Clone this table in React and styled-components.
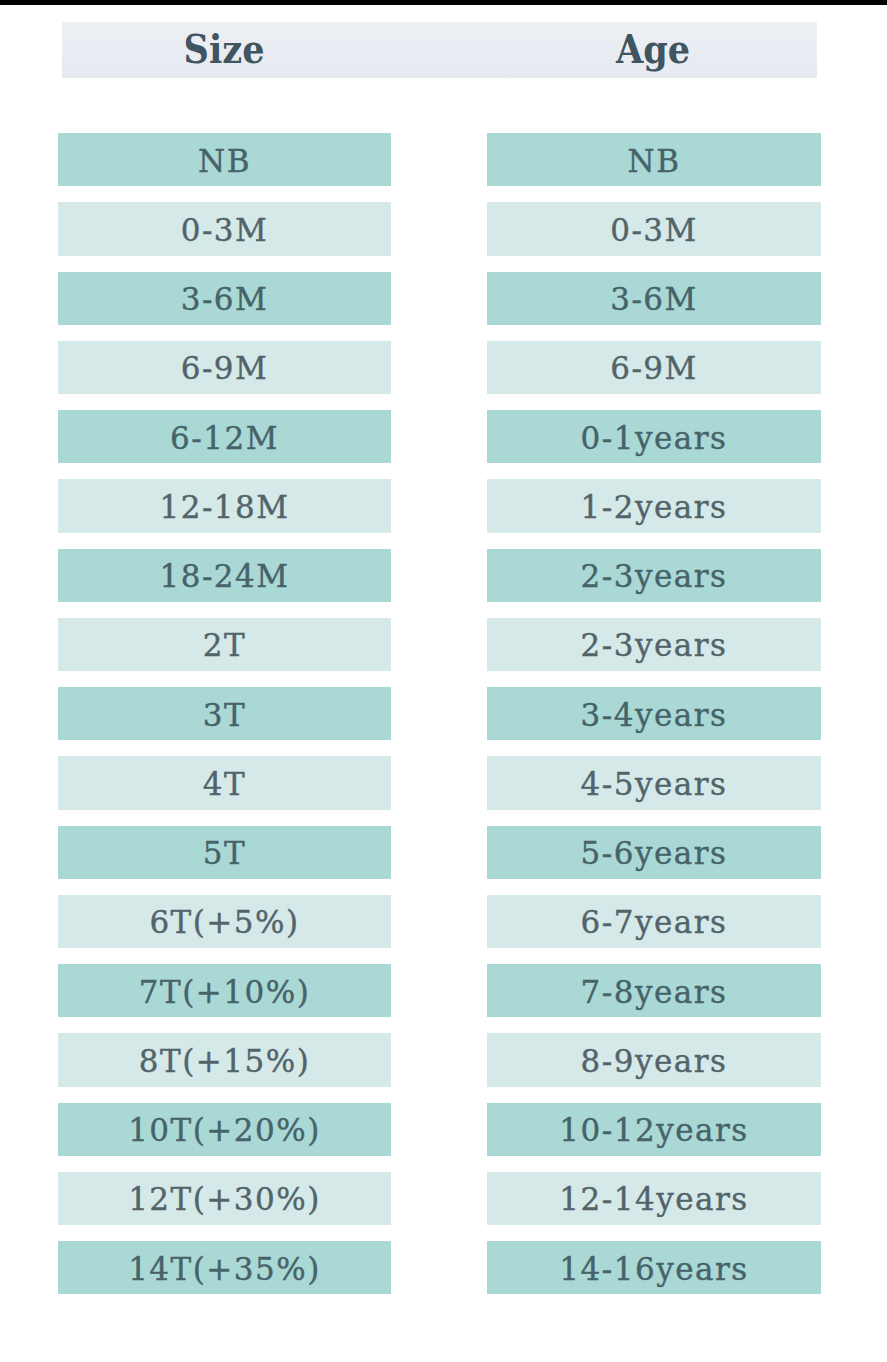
import styled, { createGlobalStyle } from "styled-components";

const GlobalStyle = createGlobalStyle`
  html, body {
    margin: 0;
    padding: 0;
    background: #ffffff;
  }
  body {
    font-family: "DejaVu Serif", "Liberation Serif", serif;
  }
`;

const Page = styled.div`
  width: 887px;
  min-height: 1362px;
  background: #ffffff;
  border-top: 5px solid #000000;
  box-sizing: border-box;
`;

const Header = styled.div`
  margin: 17px 0 0 62px;
  width: 755px;
  height: 56px;
  background: linear-gradient(180deg, #eceff4 0%, #e7ebf1 100%);
  display: grid;
  grid-template-columns: 324px 328px;
  column-gap: 103px;
  align-items: center;
`;

const HeaderCell = styled.div`
  text-align: center;
  font-family: "DejaVu Serif Condensed", "DejaVu Serif", serif;
  font-stretch: condensed;
  font-weight: 700;
  font-size: 39px;
  color: #3f5560;
  line-height: 1;
  padding-bottom: 2px;
`;

const Chart = styled.div`
  margin: 55px 0 0 58px;
  display: grid;
  grid-template-columns: 333px 334px;
  column-gap: 96px;
  row-gap: 16px;
`;

const Cell = styled.div`
  height: 53.25px;
  display: flex;
  align-items: center;
  justify-content: center;
  background: ${(p) => (p.$dark ? "#aad8d5" : "#d5e9e9")};
  color: ${(p) => (p.$dark ? "#46636a" : "#52646a")};
  font-size: 31px;
  letter-spacing: 1.5px;
  -webkit-text-stroke: 0.4px currentColor;
  white-space: nowrap;
  padding-top: 2px;
  box-sizing: border-box;
`;

const rows = [
  ["NB", "NB"],
  ["0-3M", "0-3M"],
  ["3-6M", "3-6M"],
  ["6-9M", "6-9M"],
  ["6-12M", "0-1years"],
  ["12-18M", "1-2years"],
  ["18-24M", "2-3years"],
  ["2T", "2-3years"],
  ["3T", "3-4years"],
  ["4T", "4-5years"],
  ["5T", "5-6years"],
  ["6T(+5%)", "6-7years"],
  ["7T(+10%)", "7-8years"],
  ["8T(+15%)", "8-9years"],
  ["10T(+20%)", "10-12years"],
  ["12T(+30%)", "12-14years"],
  ["14T(+35%)", "14-16years"],
];

export default function App() {
  return (
    <>
      <GlobalStyle />
      <Page>
        <Header>
          <HeaderCell>Size</HeaderCell>
          <HeaderCell>Age</HeaderCell>
        </Header>
        <Chart>
          {rows.map(([size, age], i) => [
            <Cell key={`s${i}`} $dark={i % 2 === 0}>
              {size}
            </Cell>,
            <Cell key={`a${i}`} $dark={i % 2 === 0}>
              {age}
            </Cell>,
          ])}
        </Chart>
      </Page>
    </>
  );
}
